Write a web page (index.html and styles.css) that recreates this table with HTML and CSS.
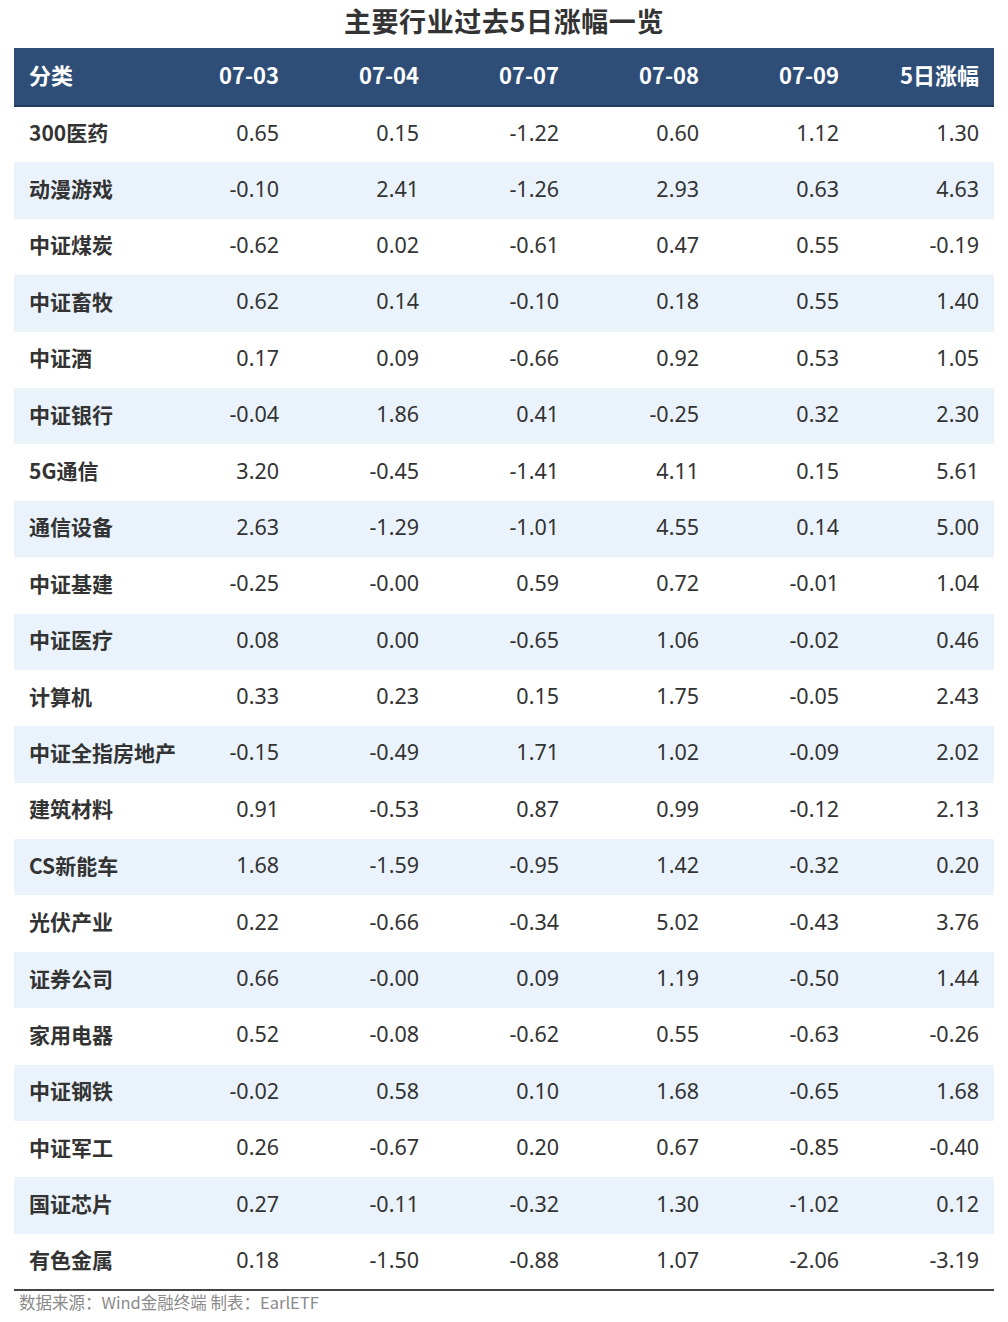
FILE: index.html
```html
<!DOCTYPE html>
<html lang="zh">
<head>
<meta charset="utf-8">
<title>主要行业过去5日涨幅一览</title>
<link rel="stylesheet" href="styles.css">
</head>
<body>
<div class="page">
  <h1 class="title">主要行业过去5日涨幅一览</h1>
  <table class="grid">
    <thead>
      <tr><th class="name">分类</th><th>07-03</th><th>07-04</th><th>07-07</th><th>07-08</th><th>07-09</th><th>5日涨幅</th></tr>
    </thead>
    <tbody>
      <tr><td class="name">300医药</td><td>0.65</td><td>0.15</td><td>-1.22</td><td>0.60</td><td>1.12</td><td>1.30</td></tr>
      <tr><td class="name">动漫游戏</td><td>-0.10</td><td>2.41</td><td>-1.26</td><td>2.93</td><td>0.63</td><td>4.63</td></tr>
      <tr><td class="name">中证煤炭</td><td>-0.62</td><td>0.02</td><td>-0.61</td><td>0.47</td><td>0.55</td><td>-0.19</td></tr>
      <tr><td class="name">中证畜牧</td><td>0.62</td><td>0.14</td><td>-0.10</td><td>0.18</td><td>0.55</td><td>1.40</td></tr>
      <tr><td class="name">中证酒</td><td>0.17</td><td>0.09</td><td>-0.66</td><td>0.92</td><td>0.53</td><td>1.05</td></tr>
      <tr><td class="name">中证银行</td><td>-0.04</td><td>1.86</td><td>0.41</td><td>-0.25</td><td>0.32</td><td>2.30</td></tr>
      <tr><td class="name">5G通信</td><td>3.20</td><td>-0.45</td><td>-1.41</td><td>4.11</td><td>0.15</td><td>5.61</td></tr>
      <tr><td class="name">通信设备</td><td>2.63</td><td>-1.29</td><td>-1.01</td><td>4.55</td><td>0.14</td><td>5.00</td></tr>
      <tr><td class="name">中证基建</td><td>-0.25</td><td>-0.00</td><td>0.59</td><td>0.72</td><td>-0.01</td><td>1.04</td></tr>
      <tr><td class="name">中证医疗</td><td>0.08</td><td>0.00</td><td>-0.65</td><td>1.06</td><td>-0.02</td><td>0.46</td></tr>
      <tr><td class="name">计算机</td><td>0.33</td><td>0.23</td><td>0.15</td><td>1.75</td><td>-0.05</td><td>2.43</td></tr>
      <tr><td class="name">中证全指房地产</td><td>-0.15</td><td>-0.49</td><td>1.71</td><td>1.02</td><td>-0.09</td><td>2.02</td></tr>
      <tr><td class="name">建筑材料</td><td>0.91</td><td>-0.53</td><td>0.87</td><td>0.99</td><td>-0.12</td><td>2.13</td></tr>
      <tr><td class="name">CS新能车</td><td>1.68</td><td>-1.59</td><td>-0.95</td><td>1.42</td><td>-0.32</td><td>0.20</td></tr>
      <tr><td class="name">光伏产业</td><td>0.22</td><td>-0.66</td><td>-0.34</td><td>5.02</td><td>-0.43</td><td>3.76</td></tr>
      <tr><td class="name">证券公司</td><td>0.66</td><td>-0.00</td><td>0.09</td><td>1.19</td><td>-0.50</td><td>1.44</td></tr>
      <tr><td class="name">家用电器</td><td>0.52</td><td>-0.08</td><td>-0.62</td><td>0.55</td><td>-0.63</td><td>-0.26</td></tr>
      <tr><td class="name">中证钢铁</td><td>-0.02</td><td>0.58</td><td>0.10</td><td>1.68</td><td>-0.65</td><td>1.68</td></tr>
      <tr><td class="name">中证军工</td><td>0.26</td><td>-0.67</td><td>0.20</td><td>0.67</td><td>-0.85</td><td>-0.40</td></tr>
      <tr><td class="name">国证芯片</td><td>0.27</td><td>-0.11</td><td>-0.32</td><td>1.30</td><td>-1.02</td><td>0.12</td></tr>
      <tr><td class="name">有色金属</td><td>0.18</td><td>-1.50</td><td>-0.88</td><td>1.07</td><td>-2.06</td><td>-3.19</td></tr>
    </tbody>
  </table>
  <p class="source">数据来源：Wind金融终端 制表：EarlETF</p>
</div>
</body>
</html>
```
FILE: styles.css
```css
html, body {
  margin: 0;
  padding: 0;
  background: #ffffff;
}
.page {
  width: 1008px;
  font-family: "Noto Sans", "Noto Sans CJK SC", sans-serif;
  color: #333333;
}
.title {
  margin: 0;
  height: 48px;
  line-height: 42px;
  text-align: center;
  font-family: "Noto Sans CJK SC", sans-serif;
  font-size: 27px;
  font-weight: 700;
  color: #333333;
  letter-spacing: 0.6px;
}
.grid {
  margin-left: 14px;
  width: 980px;
  border-collapse: collapse;
  table-layout: fixed;
}
.grid th, .grid td {
  width: 140px;
  padding: 0 15px 0 0;
  text-align: right;
  white-space: nowrap;
  box-sizing: border-box;
}
.grid thead tr {
  background: #2f4e77;
  border-bottom: 2px solid #233b5c;
}
.grid th {
  height: 58px;
  color: #ffffff;
  font-family: "Noto Sans CJK SC", sans-serif;
  font-size: 22px;
  font-weight: 700;
  padding-bottom: 6px;
}
.grid td {
  height: 56.4px;
  font-size: 21.5px;
  color: #333333;
  padding-bottom: 5px;
}
.grid tbody tr:nth-child(even) {
  background: #eaf3fc;
}
.grid tbody tr:last-child {
  border-bottom: 2px solid #444444;
}
.grid th.name {
  text-align: left;
  padding: 0 0 6px 15px;
}
.grid td.name {
  text-align: left;
  padding: 0 0 5px 15px;
  font-family: "Noto Sans CJK SC", sans-serif;
  font-size: 21px;
  font-weight: 700;
  color: #333333;
}
.source {
  margin: 0;
  padding-left: 19px;
  line-height: 22px;
  font-family: "Noto Sans CJK SC", sans-serif;
  font-size: 16.5px;
  color: #8a8a8a;
}
```
